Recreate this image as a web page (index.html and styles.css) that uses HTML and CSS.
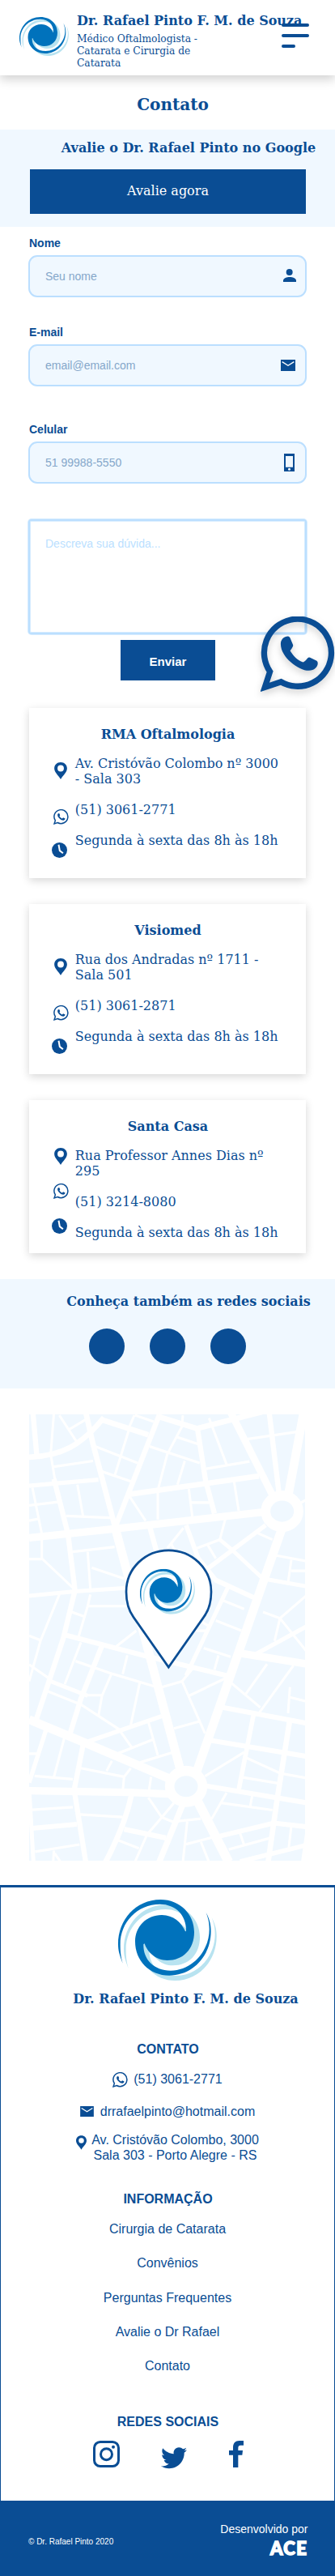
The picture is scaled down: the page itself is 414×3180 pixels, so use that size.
FILE: index.html
```html
<!DOCTYPE html>
<html lang="pt-BR">
<head>
<meta charset="utf-8">
<meta name="viewport" content="width=device-width, initial-scale=1">
<title>Contato - Dr. Rafael Pinto</title>
<link rel="stylesheet" href="styles.css">
</head>
<body>
<svg class="sprite" aria-hidden="true">
  <defs>
    <path id="swirl-shape" d="M17 236C5 205 0 190 0 165C0 75 65 0 157 0C230 0 282 55 282 120C282 185 240 225 182 225C140 225 108 195 98 163L94 165C92 220 130 263 195 263C275 263 338 190 338 110C338 80 332 65 326 48C338 70 344 90 344 118C344 210 275 281 190 281C115 281 63 225 63 155C63 100 105 57 162 57C205 57 235 85 249 118L252 117C254 60 215 17 155 17C70 17 8 85 8 165C8 195 10 210 17 236Z"/>
    <symbol id="swirl" viewBox="0 0 366 300" preserveAspectRatio="none">
      <use href="#swirl-shape" class="swirl-light" x="21" y="19"/>
      <use href="#swirl-shape" class="swirl-dark"/>
    </symbol>
    <symbol id="whatsapp" viewBox="0 0 280 280">
      <path class="bubble" d="M16 263L35 205A125 125 0 1 1 76 243Z"/>
      <path d="M75 102C75 85 89 73 103 74Q108 75 110 80L121 106Q122 112 110 127C121 146 138 164 158 170Q164 169 175 155Q179 151 184 153L209 165Q213 168 213 174C212 190 200 200 180 201C143 202 75 152 75 102Z"/>
    </symbol>
    <symbol id="pin" viewBox="0 0 48 64">
      <path fill-rule="evenodd" d="M24 0C38 0 48 10 48 23C48 38 34 48 24 64C14 48 0 38 0 23C0 10 10 0 24 0ZM24 11A12 12 0 1 0 24 35A12 12 0 1 0 24 11Z"/>
    </symbol>
    <symbol id="clock" viewBox="0 0 56 56">
      <circle cx="28" cy="28" r="28"/>
      <path d="M25 8L29 30L41 39" fill="none" stroke="#fff" stroke-width="6"/>
    </symbol>
    <symbol id="mail" viewBox="0 0 54 42">
      <path d="M0 0H54V42H0Z"/>
      <path d="M5 8L27 22L49 8" fill="none" stroke="#fff" stroke-width="4"/>
    </symbol>
  </defs>
</svg>

<header class="header">
  <svg class="header-logo"><use href="#swirl"/></svg>
  <div class="header-text">
    <h2 class="header-name">Dr. Rafael Pinto F. M. de Souza</h2>
    <p class="header-sub">Médico Oftalmologista - Catarata e Cirurgia de Catarata</p>
  </div>
  <button class="menu" aria-label="Menu"><span></span><span></span><span class="short"></span></button>
</header>

<main>
  <h1 class="page-title">Contato</h1>

  <section class="review">
    <h2 class="band-title">Avalie o Dr. Rafael Pinto no Google</h2>
    <a class="review-button">Avalie agora</a>
  </section>

  <form class="form">
    <label class="label" for="nome">Nome</label>
    <div class="field">
      <input id="nome" type="text" placeholder="Seu nome">
      <svg class="icon-user" viewBox="0 0 48 48"><circle cx="23" cy="12" r="12"/><path d="M0 48V42C4 26 44 26 48 42V48Z"/></svg>
    </div>
    <label class="label" for="email">E-mail</label>
    <div class="field field-wide-gap">
      <input id="email" type="text" placeholder="email@email.com">
      <svg class="icon-mail"><use href="#mail"/></svg>
    </div>
    <label class="label" for="celular">Celular</label>
    <div class="field">
      <input id="celular" type="text" placeholder="51 99988-5550">
      <svg class="icon-phone" viewBox="0 0 39 66"><path fill-rule="evenodd" d="M0 0H39V66H0ZM6 9V50H33V9Z"/><circle cx="19.500" cy="58" r="4.500" fill="#fff"/></svg>
    </div>
    <textarea class="message" placeholder="Descreva sua dúvida..."></textarea>
    <div class="submit-row">
      <button class="submit" type="button">Enviar</button>
      <svg class="float-whatsapp"><use href="#whatsapp"/></svg>
    </div>
  </form>

  <section class="offices">
    <article class="card">
      <h3>RMA Oftalmologia</h3>
      <div class="card-body">
        <div class="card-icons">
          <svg class="i-pin"><use href="#pin"/></svg>
          <svg class="i-wa"><use href="#whatsapp"/></svg>
          <svg class="i-clock"><use href="#clock"/></svg>
        </div>
        <div class="card-lines">
          <p>Av. Cristóvão Colombo nº 3000 - Sala 303</p>
          <p>(51) 3061-2771</p>
          <p>Segunda à sexta das 8h às 18h</p>
        </div>
      </div>
    </article>
    <article class="card">
      <h3>Visiomed</h3>
      <div class="card-body">
        <div class="card-icons">
          <svg class="i-pin"><use href="#pin"/></svg>
          <svg class="i-wa"><use href="#whatsapp"/></svg>
          <svg class="i-clock"><use href="#clock"/></svg>
        </div>
        <div class="card-lines">
          <p>Rua dos Andradas nº 1711 - Sala 501</p>
          <p>(51) 3061-2871</p>
          <p>Segunda à sexta das 8h às 18h</p>
        </div>
      </div>
    </article>
    <article class="card card-compact">
      <h3>Santa Casa</h3>
      <div class="card-body">
        <div class="card-icons">
          <svg class="i-pin"><use href="#pin"/></svg>
          <svg class="i-wa"><use href="#whatsapp"/></svg>
          <svg class="i-clock"><use href="#clock"/></svg>
        </div>
        <div class="card-lines">
          <p>Rua Professor Annes Dias nº 295</p>
          <p>(51) 3214-8080</p>
          <p>Segunda à sexta das 8h às 18h</p>
        </div>
      </div>
    </article>
  </section>

  <section class="social">
    <h2 class="band-title">Conheça também as redes sociais</h2>
    <div class="social-dots"><a></a><a></a><a></a></div>
  </section>

  <svg class="map" viewBox="108 17 1023 1543" preserveAspectRatio="none">
    <path fill="#f0f8ff" d="M108 17H1131V1560H108Z"/>
    <g fill="none" stroke="#fff">
      <g stroke-width="26">
        <path d="M850 0L1015 305"/>
        <path d="M1128 0L1068 300" stroke-width="32"/>
        <path d="M108 444L430 412L975 355"/>
        <path d="M428 412L670 1250" stroke-width="32"/>
        <path d="M318 10L345 120L428 412" stroke-width="20"/>
        <path d="M1046 410L730 1250" stroke-width="32"/>
        <path d="M108 1072L330 1158L625 1275" stroke-width="30"/>
        <path d="M108 1318L480 1324L640 1330"/>
        <path d="M732 1353L848 1565" stroke-width="34"/>
        <path d="M680 1360L590 1565" stroke-width="22"/>
        <path d="M488 1330C470 1410 440 1480 388 1570" stroke-width="20"/>
      </g>
      <g stroke-width="19">
        <path d="M122 10L136 155"/>
        <path d="M108 165C230 160 300 125 385 28"/>
        <path d="M378 36L550 88"/>
        <path d="M590 20L425 412"/>
        <path d="M585 24L730 66L990 4"/>
        <path d="M732 66L762 245L795 360"/>
        <path d="M998 10L1035 295"/>
        <path d="M480 293L960 230"/>
        <path d="M108 264L365 243" stroke-width="15"/>
        <path d="M200 240L252 430L278 625"/>
        <path d="M108 644L278 629L470 617" stroke-width="14"/>
        <path d="M268 620L246 745L135 1070" stroke-width="0"/>
        <path d="M278 625L235 790L135 1070"/>
        <path d="M235 778L540 852L840 920" stroke-width="17"/>
        <path d="M380 812L300 1000L260 1120"/>
        <path d="M183 938L325 990" stroke-width="14"/>
        <path d="M320 1150L600 1060" stroke-width="15"/>
        <path d="M175 1095L108 1290" stroke-width="16"/>
        <path d="M310 1150L275 1315L318 1565" stroke-width="19"/>
        <path d="M108 1310L124 1565" stroke-width="15"/>
        <path d="M985 400L770 550" stroke-width="16"/>
        <path d="M815 450L860 485L975 585L1140 612" stroke-width="14"/>
        <path d="M555 405L580 490"/>
        <path d="M690 400L735 515L800 590L940 650" stroke-width="17"/>
        <path d="M845 615L690 920" stroke-width="15"/>
        <path d="M890 843L1140 880" stroke-width="26"/>
        <path d="M950 845L1140 748" stroke-width="15"/>
        <path d="M825 1030L1140 1085" stroke-width="17"/>
        <path d="M782 1144L1140 1200" stroke-width="17"/>
        <path d="M940 1055L885 1315" stroke-width="17"/>
        <path d="M1075 1070L1028 1345L994 1565" stroke-width="20"/>
        <path d="M765 1302L1140 1360" stroke-width="17"/>
        <path d="M815 1475L1015 1430L1140 1443" stroke-width="17"/>
        <path d="M890 1563L1140 1505" stroke-width="16"/>
        <path d="M1140 1460L1124 1565" stroke-width="16"/>
        <path d="M460 1451L615 1481" stroke-width="18"/>
        <path d="M118 1448L285 1434" stroke-width="17"/>
      </g>
      <g stroke-width="9">
        <path d="M200 10L188 155L205 250M220 20L290 120M255 70L318 35M200 198L345 178M498 20L475 70M500 20L570 42M478 70L425 230M345 125L510 185M370 212L490 250M555 128L740 185M678 20L675 50M680 50L620 155L585 280M655 95L735 120M685 178L658 260M775 30L840 190M765 205L925 180M915 103L1120 75"/>
        <path d="M287 260L308 370M245 368L425 375M120 270L155 430V515L280 625M108 332L215 320M108 384L145 378M108 517H155M270 492L425 475M325 492L335 620M340 547L460 585M480 300L540 385M585 288V380M700 275L713 370M710 322H775M868 250L885 350M835 380L815 450M730 480L815 450M770 468L800 515M680 410L620 480M635 465L655 500M950 425L1010 450M1110 325L1140 310"/>
        <path d="M1025 505L1140 525M1080 520L1068 598M1080 558H1140M975 700L1038 722L1140 640M1038 722L1018 800M1038 722L1140 840M825 660L905 690M800 730L895 765M725 765H765M750 735L775 750M755 825L855 855M810 850L795 900"/>
        <path d="M220 640L150 800L108 940M265 700L310 715M335 640L325 680L290 790M325 680H470M505 765L430 820M108 782L155 800M300 805L240 950M280 870L420 915L600 965M472 850L455 915M415 910L378 990L365 1060M320 988H378M178 975L300 1020L440 1105L490 1170M518 945L485 1090M550 1080L585 1195M108 882L190 935M435 1190L570 1140M520 1220L660 1180M645 1103L745 1077M600 960L675 940L715 895M675 940L760 1120M700 990L835 930M850 940L965 1030M990 880L910 985M1088 885L960 1050M1075 960L1068 1050M1075 995L1140 1010"/>
        <path d="M240 1130L200 1270M128 1267L270 1278M108 1190H135M300 1240L460 1270L485 1240M460 1270L455 1320M415 1215L395 1250M560 1270L552 1320M760 1268L905 1185M915 1205L1040 1258L1140 1275M900 1272L1030 1292M120 1384L270 1375M295 1400L455 1409M550 1342L600 1410L645 1360M600 1410L640 1425L745 1415M600 1410L545 1470L500 1565M840 1325L785 1415M820 1360L1010 1385M935 1335L928 1370M694 1425L678 1565M690 1503L785 1480M745 1495L775 1565M848 1521L1000 1482M890 1465L906 1508M440 1490L515 1517M130 1529L295 1504M200 1525L197 1565M203 1535L225 1565M1080 1440L1070 1520"/>
      </g>
    </g>
    <g fill="#f0f8ff" stroke="#fff" stroke-width="35">
      <ellipse cx="1046" cy="352" rx="61" ry="54"/>
      <ellipse cx="690" cy="1303" rx="61" ry="54"/>
    </g>
    <path class="marker" d="M625 891L495 718C475 692 468 665 468 630C468 550 538 487 625 487C712 487 783 550 783 630C783 665 776 692 755 718Z"/>
    <use href="#swirl" x="519" y="551" width="204" height="157"/>
  </svg>
</main>

<footer class="footer">
  <div class="footer-main">
    <svg class="footer-logo"><use href="#swirl"/></svg>
    <h2 class="footer-name">Dr. Rafael Pinto F. M. de Souza</h2>
    <h3 class="footer-heading">CONTATO</h3>
    <p class="contact contact-phone"><svg class="i-wa"><use href="#whatsapp"/></svg><span>(51) 3061-2771</span></p>
    <p class="contact contact-mail"><svg><use href="#mail"/></svg><span>drrafaelpinto@hotmail.com</span></p>
    <p class="contact contact-address"><svg><use href="#pin"/></svg><span>Av. Cristóvão Colombo, 3000<br>Sala 303 - Porto Alegre - RS</span></p>
    <h3 class="footer-heading info-heading">INFORMAÇÃO</h3>
    <nav class="links">
      <a>Cirurgia de Catarata</a>
      <a>Convênios</a>
      <a>Perguntas Frequentes</a>
      <a>Avalie o Dr Rafael</a>
      <a>Contato</a>
    </nav>
    <h3 class="footer-heading social-heading">REDES SOCIAIS</h3>
    <div class="networks">
      <svg class="instagram" viewBox="0 0 99 99"><g fill="none" stroke="#0a4d94" stroke-width="9"><rect x="4.500" y="4.500" width="90" height="90" rx="22"/><circle cx="49.500" cy="50" r="21"/></g><circle cx="75" cy="23" r="6"/></svg>
      <svg class="twitter" viewBox="0 0 24 20"><path d="M24 2.300c-.9.400-1.800.7-2.800.8 1-.6 1.800-1.600 2.200-2.700-1 .6-2 1-3.100 1.200C19.400.6 18.100 0 16.600 0c-3.200 0-5.500 3-4.800 6.100C7.700 5.900 4.100 3.900 1.700.9.400 3.100 1 6 3.200 7.500c-.8 0-1.600-.2-2.200-.6-.1 2.300 1.600 4.400 3.900 4.900-.7.200-1.500.2-2.200.1.600 2 2.400 3.400 4.600 3.400C5.200 17 2.600 17.700 0 17.400 2.200 18.800 4.800 19.600 7.500 19.600c9.100 0 14.300-7.700 14-14.600 1-.7 1.800-1.600 2.500-2.700z"/></svg>
      <svg class="facebook" viewBox="0 0 54 99"><path d="M15 99V53H0V36H15V25C15 8 24 0 38 0H54V17H43C36 17 34 21 34 27V36H51L49 53H34V99Z"/></svg>
    </div>
  </div>
  <div class="footer-bar">
    <p class="copyright">© Dr. Rafael Pinto 2020</p>
    <div class="credit"><p>Desenvolvido por</p><strong>ACE</strong></div>
  </div>
</footer>
</body>
</html>
```
FILE: styles.css
```css
* { box-sizing: border-box; }
body, h1, h2, h3, p { margin: 0; }
body { background: #fff; color: #0a4d94; font: 16px/19px "DejaVu Serif", serif; overflow-x: hidden; }
svg { display: block; flex: none; fill: #0a4d94; overflow: visible; }
.sprite { position: absolute; width: 0; height: 0; }
.bubble { fill: none; stroke: #0a4d94; stroke-width: 22; stroke-miterlimit: 10; }
.swirl-light { fill: #b8e3f0; }
.swirl-dark { fill: #0072bc; }

.header { position: relative; display: flex; height: 93px; padding: 16px 0 0 24px; background: #fff; box-shadow: 0 5px 12px rgba(0, 0, 0, .18); }
.header-logo { width: 61px; height: 48px; margin-top: 5px; }
.header-logo .swirl-dark { fill: #0a4d94; }
.header-text { margin-left: 10px; }
.header-name { font-size: 16px; white-space: nowrap; }
.header-sub { width: 154px; margin-top: 6px; font-size: 12.250px; line-height: 15px; }
.menu { position: absolute; top: 29px; left: 348px; display: flex; flex-direction: column; gap: 9px; padding: 0; border: 0; background: none; }
.menu span { width: 34px; height: 4px; border-radius: 2px; background: #0a4d94; }
.menu .short { width: 17px; }

.page-title { height: 67px; padding: 24px 0 0 13px; font-size: 20px; line-height: 24px; text-align: center; }

.review { height: 120px; padding: 13px 36px 0 37px; background: #f0f8ff; }
.band-title { display: flex; justify-content: center; padding-left: 51px; font-size: 16px; line-height: 19px; white-space: nowrap; }
.review-button { display: block; height: 55px; margin-top: 17px; background: #0a4d94; color: #fff; line-height: 53px; text-align: center; }

.form { padding: 12px 35px 0; font-family: "Liberation Sans", sans-serif; font-size: 14px; }
.label { display: block; margin-left: 1px; font-weight: bold; line-height: 16px; }
.field { display: flex; align-items: center; justify-content: space-between; height: 52px; margin: 7px 0 35px; padding: 0 11px 0 19px; border: 2px solid #bbdfff; border-radius: 11px; background: #f0f8ff; }
.field-wide-gap { margin-bottom: 45px; }
.field input { width: 240px; padding: 0; border: 0; outline: 0; background: none; color: #0a4d94; font: inherit; }
.field input::placeholder { color: #85a7ca; opacity: 1; }
.icon-user { width: 16px; height: 16px; margin-bottom: 2px; }
.icon-mail { width: 18px; height: 14px; margin-right: 1px; }
.icon-phone { width: 13px; height: 22px; margin-right: 2px; }
.message { display: block; width: 344px; height: 142px; margin-top: 44px; padding: 20px 19px; border: 2px solid #bbdfff; border-radius: 4px; box-shadow: 0 0 0 1px #d6ecff, inset 0 0 0 1px #d6ecff; background: #fff; font: inherit; line-height: 16px; resize: none; outline: 0; }
.message::placeholder { color: #bbdfff; opacity: 1; }
.submit-row { position: relative; display: flex; justify-content: center; padding: 7px 0 0 1px; }
.submit { width: 117px; height: 50px; padding: 2px 0 0; border: 0; background: #0a4d94; color: #fff; font: bold 15px "Liberation Sans", sans-serif; }
.float-whatsapp { position: absolute; left: 287px; top: -22px; width: 93px; height: 93px; filter: drop-shadow(0 4px 5px rgba(0, 0, 0, .18)); }

.offices { display: flex; flex-direction: column; gap: 32px; padding: 34px 36px 32px; }
.card { height: 210px; padding: 23px 28px 0; background: #fff; box-shadow: 0 3px 10px rgba(0, 0, 0, .16); }
.card h3 { padding-left: 1px; font-size: 16px; text-align: center; }
.card-body { display: flex; margin-top: 17px; }
.card-icons { width: 29px; padding-top: 8px; }
.i-wa { width: 19px; height: 19px; }
.i-wa .bubble { stroke-width: 17; }
.card .i-pin { width: 16px; height: 21px; margin-left: 3px; }
.card .i-wa { margin: 37px 0 22px 2px; }
.card .i-clock { width: 19px; height: 19px; }
.card-lines { display: flex; flex-direction: column; gap: 19px; width: 262px; padding-left: .300px; }
.card-compact { height: 189px; }
.card-compact .card-icons { padding-top: 0; }
.card-compact .i-wa { margin-top: 23px; margin-bottom: 24px; }

.social { height: 135px; padding-top: 18px; background: #f0f8ff; }
.social .band-title { padding-left: 52px; }
.social-dots { display: flex; gap: 31px; margin: 24px 0 0 110px; }
.social-dots a { width: 44px; height: 44px; border-radius: 50%; background: #0a4d94; }

.map { width: 341px; height: 551px; margin: 32px 0 30px 36px; overflow: hidden; }
.marker { fill: #fff; stroke: #0a4d94; stroke-width: 8; }

.footer { font-family: "Liberation Sans", sans-serif; }
.footer-main { display: flex; flex-direction: column; align-items: center; height: 760px; padding-top: 15px; border: solid #0a4d94; border-width: 3px 1.500px 0; line-height: 19px; }
.footer-logo { width: 122px; height: 100px; }
.footer-name { margin-top: 13px; padding-left: 45px; font: bold 16px/19px "DejaVu Serif", serif; white-space: nowrap; }
.footer-heading { margin-top: 43px; padding-left: 1px; font-size: 16px; line-height: 19px; }
.contact { display: flex; }
.contact-phone { gap: 7px; margin-top: 18px; }
.contact-phone svg { margin-top: 1px; }
.contact-mail { gap: 8px; margin-top: 20px; }
.contact-mail svg { width: 17px; height: 13px; margin-top: 3px; }
.contact-address { gap: 6px; margin-top: 16px; text-align: center; }
.contact-address svg { width: 13px; height: 18px; margin-top: 4px; }
.info-heading { margin-top: 35px; }
.links { display: flex; flex-direction: column; align-items: center; gap: 23.250px; margin-top: 18px; }
.social-heading { margin-top: 50px; }
.networks { display: flex; align-items: flex-start; width: 186px; margin: 14px 0 0 2px; }
.instagram { width: 33px; height: 33px; }
.twitter { width: 32px; height: 27px; margin: 8px 52px 0 51px; }
.facebook { width: 18px; height: 33px; }
.footer-bar { display: flex; justify-content: space-between; height: 93px; padding: 26px 33.500px 0 35px; background: #0a4d94; color: #fff; font-size: 14px; line-height: 18px; }
.copyright { margin-top: 15px; font-size: 10px; line-height: 19px; }
.credit { display: flex; flex-direction: column; align-items: flex-end; }
.credit strong { margin: 5px 0 0; font: 900 22px/20px Lato, sans-serif; letter-spacing: 1.500px; -webkit-text-stroke: 1.500px #fff; }
```
